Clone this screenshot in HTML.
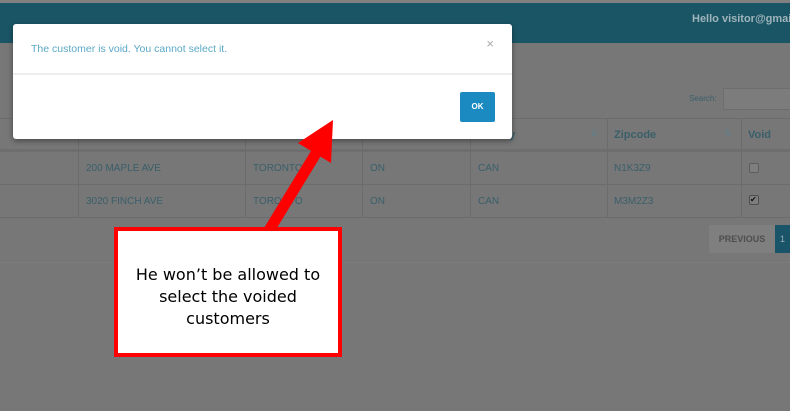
<!DOCTYPE html>
<html><head><style>
body{margin:0;width:790px;height:411px;overflow:hidden;background:#777;font-family:"Liberation Sans",sans-serif;position:relative}
.abs{position:absolute}
.top{left:0;top:3px;width:790px;height:40px;background:#1a5566}
.hello{right:0;top:13px;color:#9fb4ba;font-size:11px;font-weight:bold;white-space:nowrap;width:98px;overflow:hidden}
.t{color:#3a5f6a;font-size:10px}
.vl{width:1px;background:#6c6c6c;top:118px;height:99px}
.hl{height:1px;background:#6c6c6c;left:0;width:790px}
</style></head><body>
<div class="abs" style="left:0;top:0;width:790px;height:3px;background:#808080"></div>
<div class="abs top"></div>
<div class="abs hello">Hello visitor@gmail.com</div>
<div class="abs t" style="left:689px;top:94px;font-size:8px">Search:</div>
<div class="abs" style="left:723px;top:88px;width:70px;height:20px;background:#7c7c7c;border:1px solid #6e6e6e"></div>
<div class="abs hl" style="top:118px"></div>
<div class="abs" style="left:0;top:149px;width:790px;height:3px;background:#6e6e6e"></div>
<div class="abs hl" style="top:184px"></div>
<div class="abs hl" style="top:217px"></div>
<div class="abs hl" style="top:262px;background:#7d7d7d"></div>
<div class="abs vl" style="left:78px"></div>
<div class="abs vl" style="left:245px"></div>
<div class="abs vl" style="left:362px"></div>
<div class="abs vl" style="left:470px"></div>
<div class="abs vl" style="left:607px"></div>
<div class="abs vl" style="left:741px"></div>
<div class="abs t" style="left:505px;top:129px;font-size:11px;font-weight:bold">ry</div>
<div class="abs t" style="left:590px;top:128px;font-size:9px;color:#62808a">⇅</div>
<div class="abs t" style="left:614px;top:129px;font-size:11px;font-weight:bold">Zipcode</div>
<div class="abs t" style="left:724px;top:128px;font-size:9px;color:#62808a">⇅</div>
<div class="abs t" style="left:748px;top:129px;font-size:11px;font-weight:bold">Void</div>
<div class="abs t" style="left:86px;top:163px">200 MAPLE AVE</div>
<div class="abs t" style="left:253px;top:163px">TORONTO</div>
<div class="abs t" style="left:370px;top:163px">ON</div>
<div class="abs t" style="left:478px;top:163px">CAN</div>
<div class="abs t" style="left:614px;top:163px">N1K3Z9</div>
<div class="abs t" style="left:86px;top:196px">3020 FINCH AVE</div>
<div class="abs t" style="left:253px;top:196px">TORONTO</div>
<div class="abs t" style="left:370px;top:196px">ON</div>
<div class="abs t" style="left:478px;top:196px">CAN</div>
<div class="abs t" style="left:614px;top:196px">M3M2Z3</div>
<div class="abs" style="left:749px;top:163px;width:8px;height:8px;border:1px solid #5e5e5e;border-radius:2px;background:#7e7e7e"></div>
<div class="abs" style="left:749px;top:195px;width:8px;height:8px;border:1px solid #4e4e4e;border-radius:2px;background:#7e7e7e;font-size:8px;line-height:8px;color:#111">✔</div>
<div class="abs" style="left:709px;top:225px;width:66px;height:28px;background:#7f7f7f;border-radius:2px;color:#4e4e4e;font-size:9px;font-weight:bold;line-height:28px;text-align:center">PREVIOUS</div>
<div class="abs" style="left:775px;top:225px;width:15px;height:28px;background:#1a5468;color:#9ab;font-size:9px;line-height:28px;text-align:center">1</div>

<div class="abs" style="left:13px;top:24px;width:499px;height:115px;background:#fff;border-radius:3px;box-shadow:0 2px 6px rgba(0,0,0,.4)">
<div class="abs" style="left:18px;top:19px;color:#5ba8c6;font-size:10.5px">The customer is void. You cannot select it.</div>
<div class="abs" style="right:18px;top:12px;color:#aaa;font-size:13px">×</div>
<div class="abs" style="left:0;top:49px;width:499px;height:2px;background:#eee"></div>
<div class="abs" style="left:447px;top:68px;width:35px;height:30px;background:#1b8ac0;border-radius:2px;color:#fff;font-size:8px;font-weight:bold;line-height:30px;text-align:center">OK</div>
</div>

<svg class="abs" style="left:0;top:0" width="790" height="411">
<line x1="268" y1="232" x2="318" y2="150" stroke="#f00" stroke-width="11"/>
<polygon points="333,120 298,143 331,163" fill="#f00"/>
</svg>
<div class="abs" style="left:114px;top:227px;width:220px;height:122px;background:#fff;border:4px solid #f00;text-align:center;font-family:'DejaVu Sans',sans-serif;font-size:16px;line-height:22px;color:#000">
<div style="padding-top:33px">He won’t be allowed to<br>select the voided<br>customers</div></div>
</body></html>
